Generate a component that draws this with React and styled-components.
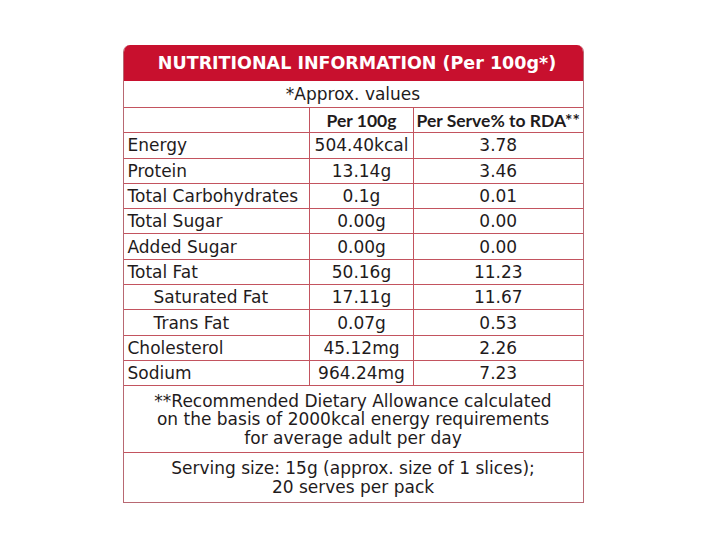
import React from "react";
import styled, { createGlobalStyle } from "styled-components";

const Global = createGlobalStyle`
  body {
    margin: 0;
    background: #fff;
    font-family: "DejaVu Sans", "Liberation Sans", sans-serif;
    color: #1f1b1c;
  }
`;

const Page = styled.div`
  display: flex;
  justify-content: center;
  padding-top: 45px;
`;

const Card = styled.div`
  width: 459px;
  border: 1px solid #b86872;
  border-top: none;
  border-radius: 7px 7px 0 0;
  overflow: hidden;
`;

const Title = styled.div`
  height: 36px;
  padding-left: 8px;
  background: #c8102e;
  color: #fff;
  font-weight: 700;
  font-size: 17.5px;
  display: flex;
  align-items: center;
  justify-content: center;
`;

const Table = styled.table`
  width: 100%;
  border-collapse: collapse;
  table-layout: fixed;
  font-size: 17px;

  td {
    border: 1px solid #c3545f;
    padding: 0;
    height: 24.3px;
    line-height: 24px;
    text-align: center;
    white-space: nowrap;
  }
  tr:first-child td {
    border-top: none;
  }
  td:first-child {
    border-left: none;
  }
  td:last-child {
    border-right: none;
  }
  tr:last-child td {
    border-bottom: none;
  }
`;

const Label = styled.td`
  && {
    text-align: left;
    padding-left: ${(p) => (p.$indent ? "30px" : "4px")};
  }
`;

const Head = styled.td`
  && {
    font-family: "Lato", "Liberation Sans", sans-serif;
    font-weight: 700;
    font-size: 17.5px;
    height: 23px;
    line-height: 23px;
  }
`;

const Note = styled.td`
  && {
    height: ${(p) => p.$h}px;
    line-height: ${(p) => p.$lh || 24}px;
    white-space: normal;
  }
`;

const rows = [
  ["Energy", "504.40kcal", "3.78"],
  ["Protein", "13.14g", "3.46"],
  ["Total Carbohydrates", "0.1g", "0.01"],
  ["Total Sugar", "0.00g", "0.00"],
  ["Added Sugar", "0.00g", "0.00"],
  ["Total Fat", "50.16g", "11.23"],
  ["Saturated Fat", "17.11g", "11.67", true],
  ["Trans Fat", "0.07g", "0.53", true],
  ["Cholesterol", "45.12mg", "2.26"],
  ["Sodium", "964.24mg", "7.23"],
];

export default function App() {
  return (
    <Page>
      <Global />
      <Card>
        <Title>NUTRITIONAL INFORMATION (Per 100g*)</Title>
        <Table>
          <colgroup>
            <col style={{ width: 186 }} />
            <col style={{ width: 104 }} />
            <col />
          </colgroup>
          <tbody>
            <tr>
              <Note colSpan={3} $h={26}>*Approx. values</Note>
            </tr>
            <tr>
              <td />
              <Head>Per 100g</Head>
              <Head>Per Serve% to RDA**</Head>
            </tr>
            {rows.map(([name, per100, rda, indent]) => (
              <tr key={name}>
                <Label $indent={indent}>{name}</Label>
                <td>{per100}</td>
                <td>{rda}</td>
              </tr>
            ))}
            <tr>
              <Note colSpan={3} $h={66} $lh={18.5}>
                **Recommended Dietary Allowance calculated
                <br />
                on the basis of 2000kcal energy requirements
                <br />
                for average adult per day
              </Note>
            </tr>
            <tr>
              <Note colSpan={3} $h={49} $lh={19}>
                Serving size: 15g (approx. size of 1 slices);
                <br />
                20 serves per pack
              </Note>
            </tr>
          </tbody>
        </Table>
      </Card>
    </Page>
  );
}
